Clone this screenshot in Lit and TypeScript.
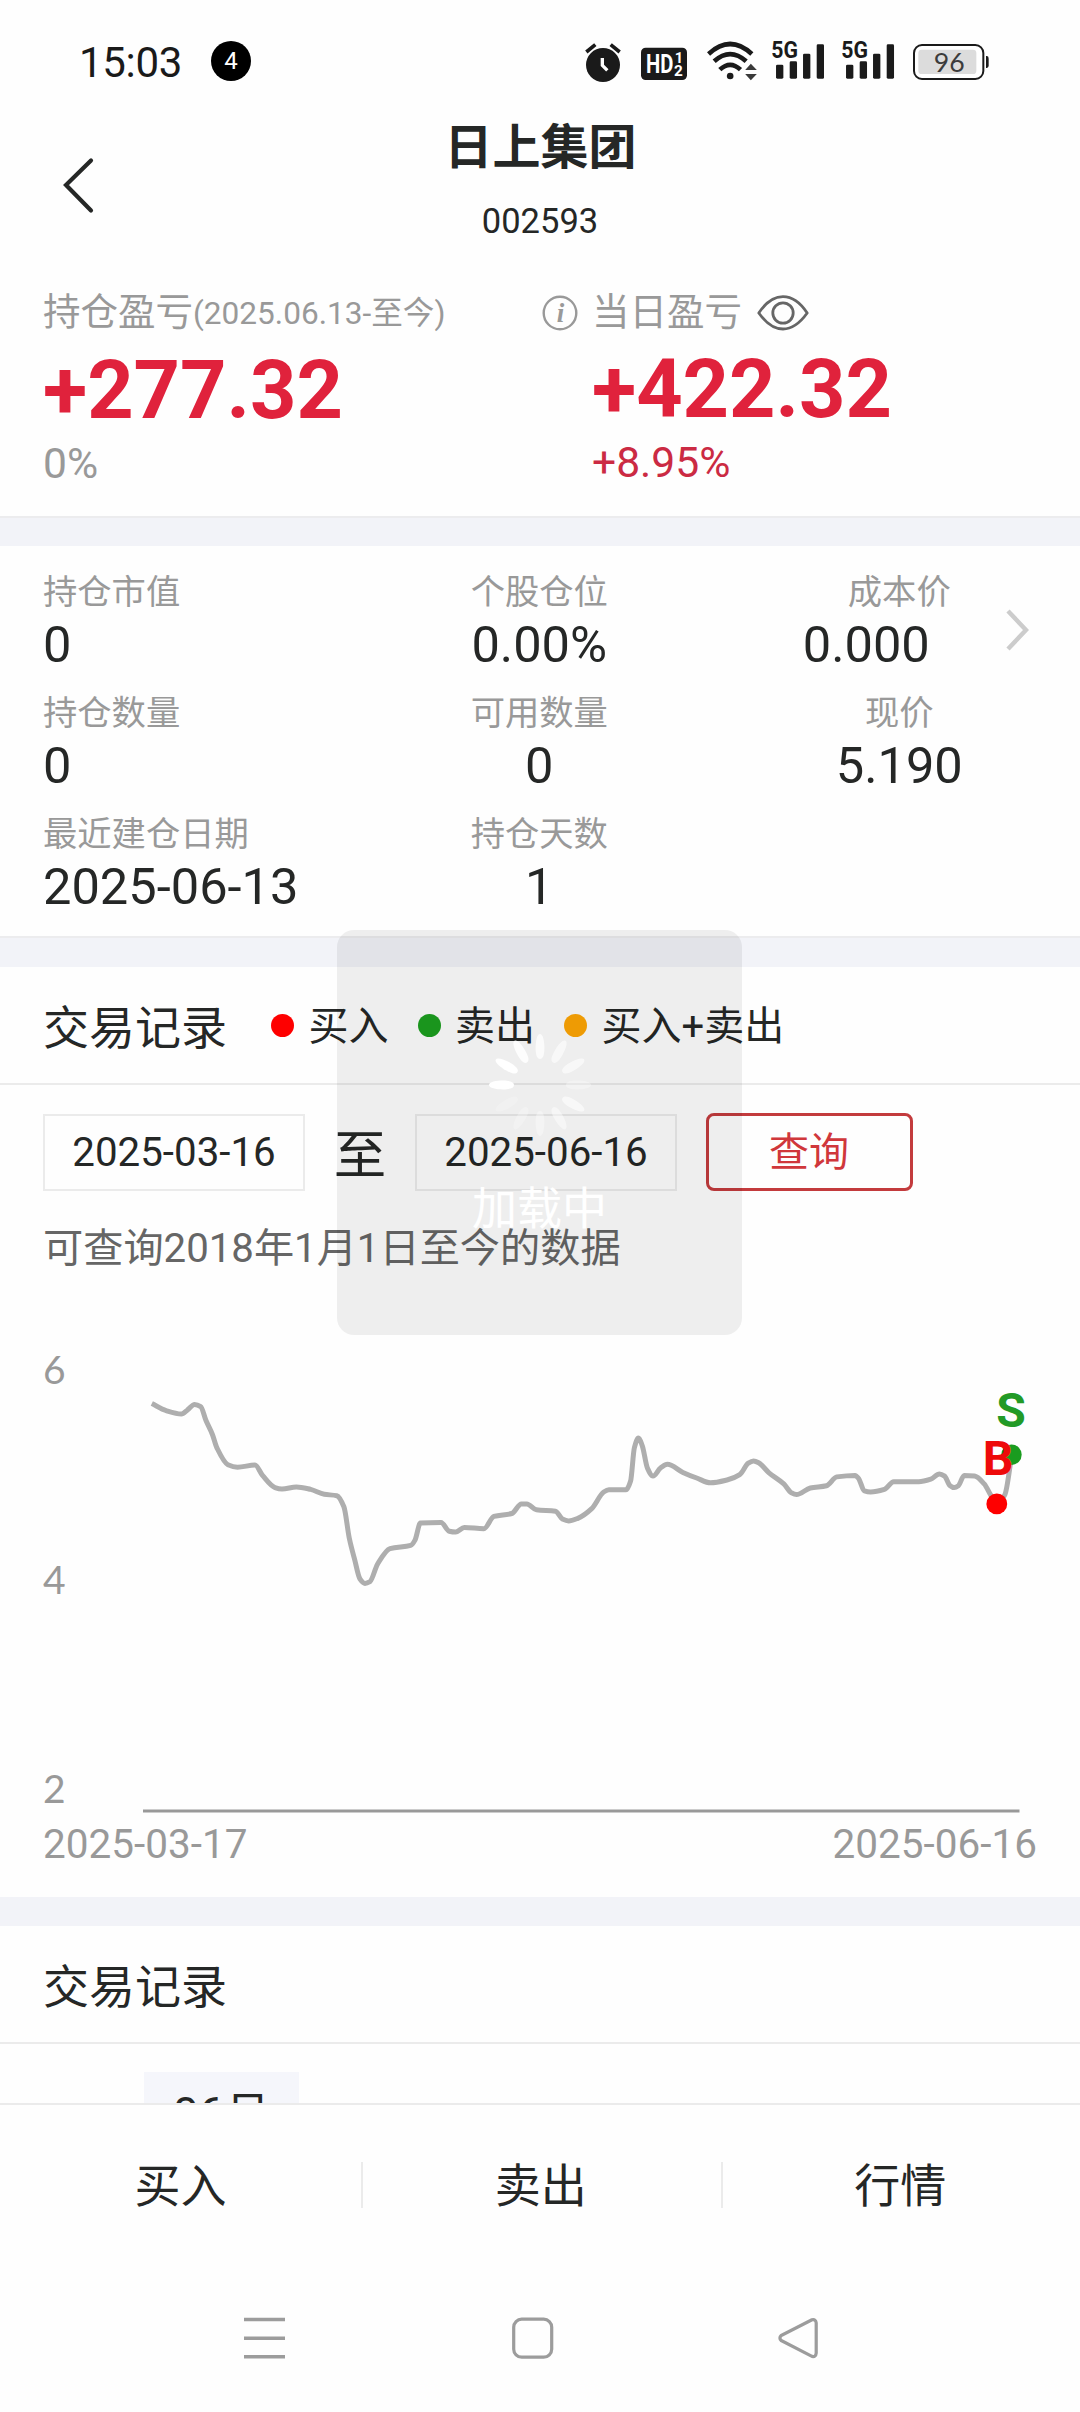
import { LitElement, html, css, svg } from "lit";
import { customElement } from "lit/decorators.js";

type Pt = [number, number];

const PRICE_LINE: Pt[] = [
  [151.8, 1403.6], [166.1, 1410.6], [181.4, 1414], [187.5, 1409.9], [194.6, 1404.4], [200.7, 1406.6],
  [206, 1420.6], [212.5, 1434.7], [216.8, 1447.6], [227.9, 1464.7], [237.5, 1467.2], [255, 1465],
  [262.5, 1475.4], [275, 1487.6], [282, 1489], [296.4, 1486.9], [310.7, 1489.4], [324.3, 1494.3],
  [336.8, 1495.7], [343.9, 1506.8], [349.3, 1538.3], [354.6, 1559.4], [360, 1579], [365, 1583.4],
  [370, 1581.6], [377.5, 1564.2], [390, 1548.6], [410.7, 1545.3], [415, 1540.1], [420.4, 1523.1],
  [441, 1522.4], [449.3, 1531.2], [455.7, 1532], [464.3, 1527.5], [483.9, 1528.7], [493.9, 1516.4],
  [511.8, 1513.5], [521.4, 1503.9], [526.8, 1503.9], [536.4, 1509.8], [555.5, 1511.3], [562.4, 1519],
  [568.6, 1520.9], [577.9, 1518.3], [591.7, 1508.7], [603.7, 1492], [608.9, 1489.8], [626.1, 1489.8],
  [630.6, 1480.9], [634.4, 1447.6], [638.5, 1438], [642.3, 1445.8], [647.4, 1468], [653, 1476.1],
  [660.5, 1468], [667.4, 1464.3], [682.9, 1472.4], [696.7, 1478], [710.5, 1482.8], [727.7, 1479.8],
  [739.7, 1474.6], [748.3, 1463.2], [753.5, 1461], [758.7, 1462.8], [769, 1472.8], [783.8, 1483.9],
  [791.4, 1492.8], [796.5, 1494.6], [810.3, 1488], [826.5, 1485.7], [836.8, 1476.9], [855.1, 1475.4],
  [858.5, 1478.3], [864.4, 1490.9], [870.6, 1492], [884.4, 1489.4], [893.7, 1481.7], [918.8, 1481.7],
  [930.8, 1479.1], [939.4, 1473.9], [944.6, 1476.1], [949.8, 1485.4], [954.3, 1487.6], [958.4, 1485.7],
  [964.2, 1475.4], [974.6, 1476.1], [984.2, 1483.9], [991.1, 1495.7], [997, 1503.9], [1004.9, 1494.6],
  [1011.8, 1454.7],
];

/** Smooth cubic path through the points, tangents limited so flat runs stay flat. */
function smoothPath(pts: Pt[]): string {
  const n = pts.length;
  const slope = (i: number) => (pts[i + 1][1] - pts[i][1]) / (pts[i + 1][0] - pts[i][0]);
  const m = pts.map((_, i) => {
    if (i === 0) return slope(0);
    if (i === n - 1) return slope(n - 2);
    const a = slope(i - 1);
    const b = slope(i);
    return a * b <= 0 ? 0 : (2 * a * b) / (a + b);
  });
  let d = `M${pts[0][0]} ${pts[0][1]}`;
  for (let i = 0; i < n - 1; i++) {
    const h = (pts[i + 1][0] - pts[i][0]) / 3;
    d += `C${(pts[i][0] + h).toFixed(1)} ${(pts[i][1] + m[i] * h).toFixed(1)} ${(pts[i + 1][0] - h).toFixed(1)} ${(pts[i + 1][1] - m[i + 1] * h).toFixed(1)} ${pts[i + 1][0]} ${pts[i + 1][1]}`;
  }
  return d;
}

const baseText = css`
  :host {
    box-sizing: border-box;
    font-family: Roboto, "Noto Sans CJK SC", sans-serif;
    color: #252726;
  }
  * { box-sizing: border-box; }
  svg { display: block; flex: none; }
`;

@customElement("status-bar")
class StatusBar extends LitElement {
  static styles = [baseText, css`
    :host { display: flex; height: 90px; padding: 30px 91px 0 79px; align-items: flex-start; color: #1a1a1a; }
    .time { font-size: 42px; line-height: 60px; padding-top: 3px; width: 132px; letter-spacing: -0.3px; }
    .badge { width: 40px; height: 40px; margin-top: 11px; border-radius: 50%; background: #000; color: #fff;
      font-size: 24px; line-height: 40px; text-align: center; }
    .grow { flex: 1; }
    .hd, .wifi { margin-left: 20px; }
    .sig1 { margin-left: 15px; }
    .sig2 { margin-left: 18.3px; }
    .bat { margin-left: 18.3px; }
    text { font-family: Roboto, sans-serif; }
    .pct { font-family: Lato, sans-serif; }
  `];

  private signal(cls: string) {
    return html`<svg class=${cls} width="52.4" height="60" viewBox="606 0 157 180">
      <text x="604" y="85" font-size="69" font-weight="700" fill="#1a1a1a" textLength="80" lengthAdjust="spacingAndGlyphs">5G</text>
      <g fill="#1a1a1a">
        <rect x="618" y="104" width="22" height="42" rx="4" />
        <rect x="659" y="94" width="22" height="52" rx="4" />
        <rect x="699" y="71" width="22" height="75" rx="4" />
        <rect x="740" y="43" width="22" height="103" rx="4" />
      </g>
    </svg>`;
  }

  render() {
    return html`
      <div class="time">15:03</div>
      <div class="badge">4</div>
      <div class="grow"></div>
      <svg width="36" height="60" viewBox="45 0 108 180">
        <circle cx="99" cy="105" r="51" fill="#1a1a1a" />
        <path d="M49 66L76 44M149 66L122 44" stroke="#1a1a1a" stroke-width="11" fill="none" />
        <path d="M97 84V106L112 121" stroke="#fff" stroke-width="10" fill="none" />
      </svg>
      <svg class="hd" width="46" height="60" viewBox="213 0 138 180">
        <rect x="213" y="53" width="138" height="97" rx="14" fill="#1a1a1a" />
        <g fill="#fff" font-weight="700">
          <text x="228" y="129" font-size="76" textLength="82" lengthAdjust="spacingAndGlyphs">HD</text>
          <text x="314" y="99" font-size="44">1</text>
          <text x="312" y="137" font-size="46">2</text>
        </g>
      </svg>
      <svg class="wifi" width="50" height="60" viewBox="411 0 149 180">
        <g fill="none" stroke="#1a1a1a" stroke-width="14">
          <path d="M415 72Q480 12 545 72" />
          <path d="M432 94Q480 51 528 94" />
          <path d="M449 119Q480 90 511 119" />
        </g>
        <circle cx="480" cy="138" r="10" fill="#1a1a1a" />
        <path d="M525 120L542 101L560 120ZM525 132L542 151L560 132Z" fill="#3a3a3a" />
      </svg>
      ${this.signal("sig1")}
      ${this.signal("sig2")}
      <svg class="bat" width="76" height="60" viewBox="1030 0 228 180">
        <rect x="1033" y="45" width="208" height="102" rx="24" fill="#fff" stroke="#1a1a1a" stroke-width="6" />
        <rect x="1046" y="59" width="174" height="73" rx="10" fill="#dcdcdc" />
        <path d="M1249 78H1252Q1257 78 1257 86V106Q1257 114 1252 114H1249Z" fill="#1a1a1a" />
        <text class="pct" x="1092" y="125" font-size="80" fill="#3c3c3c">96</text>
      </svg>
    `;
  }
}

@customElement("page-header")
class PageHeader extends LitElement {
  static styles = [baseText, css`
    :host { display: grid; grid-template-columns: 200px 1fr 200px; height: 190px; }
    .back { align-self: center; margin-left: 60px; }
    .names { padding-top: 28px; text-align: center; }
    .title { font-size: 48px; line-height: 60px; font-weight: 700; padding-left: 1px; }
    .code { font-size: 34.5px; line-height: 50px; margin-top: 18px; }
  `];
  render() {
    return html`
      <svg class="back" width="36" height="60" viewBox="0 0 36 60">
        <path d="M31 5.5L6 30L31 55.5" fill="none" stroke="#252726" stroke-width="4.2" stroke-linecap="round" />
      </svg>
      <div class="names">
        <div class="title">日上集团</div>
        <div class="code">002593</div>
      </div>
    `;
  }
}

@customElement("profit-summary")
class ProfitSummary extends LitElement {
  static styles = [baseText, css`
    :host { display: grid; grid-template-columns: 542px 1fr; height: 236px; padding-top: 7px; }
    .left { padding-left: 43px; }
    .label { display: flex; align-items: center; height: 50px; font-size: 37.5px; line-height: 50px; color: #999;
      white-space: nowrap; }
    .range { font-size: 31.6px; padding-top: 3px; }
    .day { padding-left: 13px; }
    .eye { margin-left: 15px; }
    .big { font-size: 81px; line-height: 90px; font-weight: 700; color: #e0223c; margin-top: 9px; }
    .pct { font-size: 42.6px; line-height: 50px; margin-top: 2px; color: #999; }
    .up { color: #cb2a43; }
    .right .big, .right .pct { padding-left: 50px; }
    .right .big { margin-top: 8px; }
    .i { font: italic bold 27px "Liberation Serif", serif; }
  `];
  render() {
    return html`
      <div class="left">
        <div class="label">持仓盈亏<span class="range">(2025.06.13-至今)</span></div>
        <div class="big">+277.32</div>
        <div class="pct">0%</div>
      </div>
      <div class="right">
        <div class="label">
          <svg width="37" height="38" viewBox="0 0 37 38">
            <circle cx="18" cy="20" r="16.3" fill="none" stroke="#999" stroke-width="2.4" />
            <text class="i" x="18.5" y="29" text-anchor="middle" fill="#999">i</text>
          </svg>
          <span class="day">当日盈亏</span>
          <svg class="eye" width="52" height="38" viewBox="0 0 52 38">
            <path d="M1.8 20C9 9 17 3.6 26 3.6S43 9 50.2 20C43 30 35 36 26 36S9 30 1.8 20Z" fill="none" stroke="#666" stroke-width="2.8" stroke-linejoin="round" />
            <circle cx="26" cy="20" r="10.2" fill="none" stroke="#666" stroke-width="2.8" />
          </svg>
        </div>
        <div class="big">+422.32</div>
        <div class="pct up">+8.95%</div>
      </div>
    `;
  }
}

const CELLS = [
  ["持仓市值", "0"], ["个股仓位", "0.00%"], ["成本价", "0.000"],
  ["持仓数量", "0"], ["可用数量", "0"], ["现价", "5.190"],
  ["最近建仓日期", "2025-06-13"], ["持仓天数", "1"],
];

@customElement("position-details")
class PositionDetails extends LitElement {
  static styles = [baseText, css`
    :host { display: grid; grid-template-columns: repeat(3, 360px); grid-auto-rows: 104px; row-gap: 17px;
      height: 390px; padding-top: 23px; }
    .cell { text-align: center; white-space: nowrap; padding-right: 1.5px; }
    .cell:nth-child(3n + 1) { text-align: left; padding-left: 43px; }
    .label { font-size: 34.3px; line-height: 46px; color: #999; }
    .value { font-size: 50.6px; line-height: 60px; }
    .cell:nth-child(3) .value { padding-right: 66px; }
    .arrow { grid-column: 3; grid-row: 1; justify-self: end; align-self: center; margin: 18px 51px 0 0; }
    .c0 { grid-column: 1; } .c1 { grid-column: 2; } .c2 { grid-column: 3; }
    .r0 { grid-row: 1; } .r1 { grid-row: 2; } .r2 { grid-row: 3; }
  `];
  render() {
    return html`
      ${CELLS.map(([label, value], i) => html`
        <div class="cell c${i % 3} r${Math.floor(i / 3)}">
          <div class="label">${label}</div>
          <div class="value">${value}</div>
        </div>`)}
      <svg class="arrow" width="24" height="42" viewBox="0 0 24 42">
        <path d="M3 2L21 21L3 40" fill="none" stroke="#ccc" stroke-width="4.4" />
      </svg>
    `;
  }
}

@customElement("trade-chart")
class TradeChart extends LitElement {
  static styles = [baseText, css`
    :host { display: block; }
    .head { display: flex; align-items: center; height: 118px; padding: 0 43px; border-bottom: 2px solid #ebebeb; white-space: nowrap; }
    .title { font-size: 46px; line-height: 60px; padding-top: 5px; width: 228px; }
    .key { display: flex; align-items: center; font-size: 40px; line-height: 50px; margin-right: 29px; }
    .key span { padding: 4px 0 0 14.5px; }
    .dot { width: 23px; height: 23px; border-radius: 50%; }
    .buy { background: #fe0000; }
    .sell { background: #1c9f1f; }
    .both { background: #fea605; }
    .query { display: flex; align-items: center; height: 78px; margin: 28px 0 0 43px; }
    .date { width: 262px; height: 77px; border: 2px solid #ebebeb; font-size: 40.3px; line-height: 73px; text-align: center; }
    .to { width: 110px; text-align: center; font-size: 52.5px; line-height: 60px; padding-top: 8px; }
    .btn { width: 207px; height: 78px; margin-left: 29px; border: 3px solid #c33b3d; border-radius: 8px; color: #d0373b;
      font-size: 40px; line-height: 73px; text-align: center; padding-right: 1px; }
    .hint { margin: 33px 0 -1px 43px; font-size: 40.2px; line-height: 50px; color: #666; white-space: nowrap; }
    .axis { font-family: Lato, sans-serif; font-size: 39px; fill: #999; }
    .day { font-size: 40.5px; fill: #999; }
    .mark { font-family: Roboto, sans-serif; font-size: 48px; font-weight: 700; }
  `];
  render() {
    return html`
      <div class="head">
        <div class="title">交易记录</div>
        <div class="key"><div class="dot buy"></div><span>买入</span></div>
        <div class="key"><div class="dot sell"></div><span>卖出</span></div>
        <div class="key"><div class="dot both"></div><span>买入+卖出</span></div>
      </div>
      <div class="query">
        <div class="date">2025-03-16</div>
        <div class="to">至</div>
        <div class="date">2025-06-16</div>
        <div class="btn">查询</div>
      </div>
      <div class="hint">可查询2018年1月1日至今的数据</div>
      <svg width="1080" height="624" viewBox="0 1273 1080 624">
        ${svg`
          <text class="axis" x="43" y="1383.5">6</text>
          <text class="axis" x="43" y="1593.7">4</text>
          <text class="axis" x="43" y="1803">2</text>
          <path d=${smoothPath(PRICE_LINE)} fill="none" stroke="#aeaeae" stroke-width="5" stroke-linejoin="round" />
          <path d="M143 1811H1019.5" stroke="#999" stroke-width="3.2" />
          <circle cx="1011.5" cy="1454.7" r="10.2" fill="#1a9c1f" />
          <circle cx="996.8" cy="1503.9" r="10.4" fill="#fe0000" />
          <text class="mark" x="1011" y="1426.5" text-anchor="middle" fill="#229a26">S</text>
          <text class="mark" x="998" y="1475" text-anchor="middle" fill="#ee0a0a">B</text>
          <text class="day" x="43" y="1857.5">2025-03-17</text>
          <text class="day" x="1037" y="1857.5" text-anchor="end">2025-06-16</text>
        `}
      </svg>
    `;
  }
}

@customElement("trade-records")
class TradeRecords extends LitElement {
  static styles = [baseText, css`
    :host { display: block; height: 177px; overflow: hidden; }
    .head { display: flex; align-items: center; height: 118px; padding: 5px 43px 0; border-bottom: 2px solid #ebebeb; font-size: 46px; line-height: 60px; }
    .month { width: 155px; height: 84px; margin: 28px 0 0 144px; background: #f5f6fb; font-size: 46px; line-height: 84px; text-align: center; }
  `];
  render() {
    return html`<div class="head">交易记录</div><div class="month">06月</div>`;
  }
}

@customElement("action-tabs")
class ActionTabs extends LitElement {
  static styles = [baseText, css`
    :host { display: flex; align-items: center; height: 162px; border-top: 2px solid #ebebeb; }
    .tab { flex: 1; height: 46px; line-height: 48px; font-size: 46px; text-align: center; }
    .tab:first-child { flex: none; width: 361px; }
    .tab + .tab { border-left: 2px solid #ebebeb; padding-right: 2px; }
  `];
  render() {
    return html`<div class="tab">买入</div><div class="tab">卖出</div><div class="tab">行情</div>`;
  }
}

@customElement("system-nav")
class SystemNav extends LitElement {
  static styles = [baseText, css`
    :host { display: flex; align-items: center; height: 145px; padding-left: 244px; }
    .home { margin-left: 226px; }
    .prev { margin-left: 224px; }
  `];
  render() {
    return html`
      <svg width="42" height="44" viewBox="0 0 42 44">
        <path d="M0 3.5H41M0 22.2H41M0 40.8H41" stroke="#9c9c9c" stroke-width="3.6" />
      </svg>
      <svg class="home" width="42" height="44" viewBox="0 0 42 44">
        <rect x="1.7" y="3.2" width="38" height="38" rx="8" fill="none" stroke="#9c9c9c" stroke-width="3.2" />
      </svg>
      <svg class="prev" width="42" height="44" viewBox="0 0 42 44">
        <path d="M34 3.8L3.2 19.5Q0.6 22 3.2 24.5L34 40.4Q37.8 41.2 38.2 37V7Q37.8 3 34 3.8Z" fill="none" stroke="#9c9c9c" stroke-width="3.2" stroke-linejoin="round" />
      </svg>
    `;
  }
}

const PETALS = [0.75, 0.6, 0.6, 0.32, 0.6, 0.45, 0.35, 0.25, 0.2, 1, 0.95, 0.85];

@customElement("loading-toast")
class LoadingToast extends LitElement {
  static styles = [baseText, css`
    :host { display: block; width: 405px; height: 405px; border-radius: 17px; background: rgba(0, 0, 0, 0.063); overflow: hidden; }
    .spin { margin: 100px auto 0; }
    .text { font-size: 45px; line-height: 56px; margin-top: 42px; text-align: center; color: #fff; }
  `];
  render() {
    return html`
      <svg class="spin" width="110" height="110" viewBox="-55 -55 110 110">
        ${PETALS.map((o, i) => svg`
          <path transform="rotate(${i * 30})" opacity=${o} fill="#fff"
            d="M0 -51C3 -51 4.4 -44 4.4 -37C4.4 -30 3 -26 0 -26S-4.4 -30 -4.4 -37C-4.4 -44 -3 -51 0 -51Z" />`)}
      </svg>
      <div class="text">加载中</div>
    `;
  }
}

@customElement("app-root")
class AppRoot extends LitElement {
  static styles = css`
    :host { display: block; }
    .page { position: relative; width: 1080px; height: 2412px; background: #fefefe; overflow: hidden; }
    .band { box-sizing: border-box; background: #f2f3f8; border-top: 2px solid #ececee; }
    .first { height: 30px; }
    .second { height: 31px; }
    .third { height: 29px; border-top: 0; }
    .toast { position: absolute; left: 337px; top: 930px; }
  `;
  render() {
    return html`
      <div class="page">
        <status-bar></status-bar>
        <page-header></page-header>
        <profit-summary></profit-summary>
        <div class="band first"></div>
        <position-details></position-details>
        <div class="band second"></div>
        <trade-chart></trade-chart>
        <div class="band third"></div>
        <trade-records></trade-records>
        <action-tabs></action-tabs>
        <system-nav></system-nav>
        <loading-toast class="toast"></loading-toast>
      </div>
    `;
  }
}
